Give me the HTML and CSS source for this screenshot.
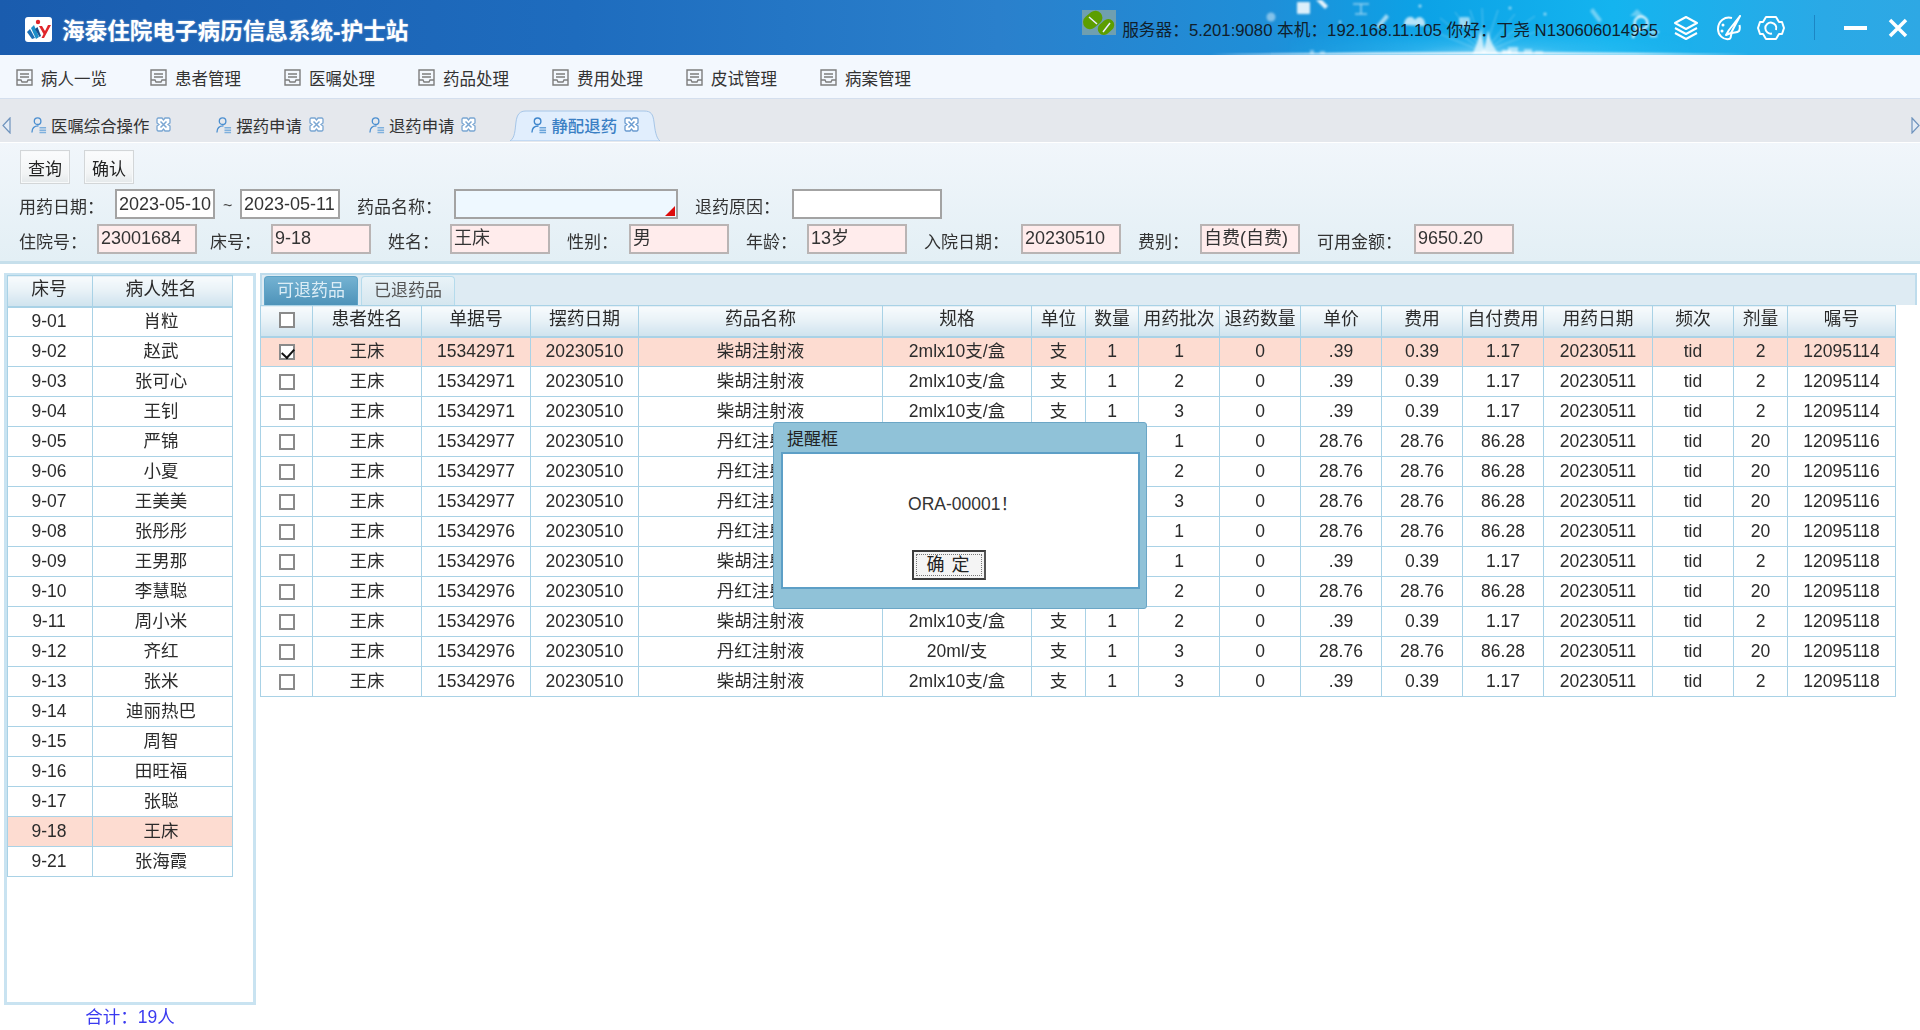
FILE: index.html
```html
<!DOCTYPE html>
<html lang="zh-CN">
<head>
<meta charset="utf-8">
<title>海泰住院电子病历信息系统-护士站</title>
<link rel="stylesheet" href="styles.css">
</head>
<body>
<header class="header">
  <svg class="burst" viewBox="0 0 1920 55" preserveAspectRatio="none" aria-hidden="true">
    <defs>
      <radialGradient id="glow" cx="50%" cy="100%" r="60%">
        <stop offset="0" stop-color="#ffffff" stop-opacity=".5"/>
        <stop offset=".35" stop-color="#7fdcff" stop-opacity=".25"/>
        <stop offset="1" stop-color="#12b4f0" stop-opacity="0"/>
      </radialGradient>
    </defs>
    <rect x="1290" y="0" width="400" height="55" fill="url(#glow)"/>
    <path d="M1210 55 Q1480 49 1750 55 Z" fill="#eef7fd"/>
    <g stroke="#fff" stroke-opacity=".3" stroke-width="1">
      <path d="M1484 52 L1455 12M1484 52 L1470 10M1484 52 L1482 8M1484 52 L1498 10M1484 52 L1515 14M1484 52 L1535 16M1484 52 L1440 18M1484 52 L1425 28M1484 52 L1550 26"/>
    </g>
    <g fill="#fff">
      <path d="M1472 55 C1476 46 1479 38 1481 28 L1484 50 L1488 30 C1490 40 1493 47 1500 55 Z" fill-opacity=".7"/>
      <rect x="1297" y="2" width="13" height="12" rx="1" fill-opacity=".85"/>
      <path d="M1316 0 L1322 0 L1328 6 L1325 9 Z" fill-opacity=".9"/>
      <circle cx="1271" cy="17" r="4.500" fill-opacity=".45"/>
      <path d="M1353 4 H1369 M1361 4 V14 M1355 14 H1367" stroke="#fff" stroke-opacity=".55" stroke-width="1.500" fill="none"/>
      <path d="M1376 26 L1386 14 L1389 17 L1379 29 Z" fill-opacity=".6"/>
      <path d="M1404 25 C1404 17 1412 14 1415 20 C1419 14 1426 18 1425 26 Z" fill-opacity=".7"/>
      <rect x="1459" y="17" width="11" height="10" rx="2" fill-opacity=".55"/>
      <path d="M1593 8 L1602 20 L1599 23 L1590 11 Z" fill-opacity=".4"/>
      <path d="M1630 16 L1637 9 L1644 16 Z" fill-opacity=".35"/>
      <circle cx="1510" cy="8" r="1.500" fill-opacity=".6"/>
      <circle cx="1545" cy="14" r="1.500" fill-opacity=".6"/>
      <circle cx="1420" cy="6" r="1.500" fill-opacity=".7"/>
      <circle cx="1340" cy="22" r="1.200" fill-opacity=".7"/>
      <rect x="1502" y="50" width="9" height="5" fill-opacity=".7"/>
      <rect x="1508" y="47" width="10" height="8" fill-opacity=".55"/>
      <rect x="1524" y="49" width="8" height="6" fill-opacity=".5"/>
      <rect x="1535" y="51" width="8" height="4" fill-opacity=".5"/>
      <rect x="1310" y="50" width="4" height="5" fill-opacity=".4"/>
      <rect x="1320" y="51" width="5" height="4" fill-opacity=".4"/>
    </g>
    <g fill="none" stroke="#fff" stroke-width="2">
      <circle cx="1641" cy="23" r="6.500"/>
      <path d="M1633 38 C1634 32 1636 30 1640 30"/>
      <path d="M1650 32 H1659 M1650 36 H1657" stroke-width="1.500"/>
    </g>
  </svg>
  <svg class="logo" viewBox="0 0 27 25" aria-hidden="true">
    <rect width="27" height="25" rx="3" fill="#fff"/>
    <path d="M2 15 L5 12 L10 21 L7 22 Z" fill="#1c6fb5"/>
    <path d="M6 11 L9 8 L14 20 L11 22 Z" fill="#1c8fc9"/>
    <path d="M10 12 L12.500 10 L16 19 L14.500 20 Z" fill="#16508f"/>
    <circle cx="13" cy="5" r="2.200" fill="#e0262b"/>
    <path d="M14 9 L17 9 L20 14 L23 8 L26 8 L19 21 L16.500 21 L18.500 17 Z" fill="#e0262b"/>
  </svg>
  <h1 class="title">海泰住院电子病历信息系统-护士站</h1>
  <div class="status">
    <svg class="pill" viewBox="0 0 34 25" aria-hidden="true">
      <rect width="34" height="25" fill="#6f9fb0"/>
      <rect x="1" y="3" width="21" height="14" rx="7" transform="rotate(-40 11 11)" fill="#5c9e00"/>
      <rect x="15" y="11" width="18" height="12" rx="6" transform="rotate(-42 24 17)" fill="#5c9e00"/>
      <path d="M7 7 L15 14M21 22 L28 13" stroke="#eef" stroke-width="1.500"/>
    </svg>
    <span class="status-text">服务器：5.201:9080 本机：192.168.11.105 你好：丁尧 N130606014955</span>
  </div>
  <div class="win-tools">
    <svg class="tool" viewBox="0 0 24 26" aria-hidden="true"><path d="M12 2 L23 8 L12 14 L1 8 Z M1 13 L12 19 L23 13 M1 18 L12 24 L23 18" fill="none" stroke="#fff" stroke-width="2" stroke-linejoin="round"/></svg>
    <svg class="tool" viewBox="0 0 24 26" aria-hidden="true"><path d="M15 3 C8 1 1 6 1 14 C1 20 6 25 12 24 C15 23.500 13 20 15 18 C17 17 20 18 22 16 C23 14 23 12 22.500 10" fill="none" stroke="#fff" stroke-width="2"/><path d="M23 1 L12 15 L9 20 L14 18 Z" fill="none" stroke="#fff" stroke-width="2" stroke-linejoin="round"/><circle cx="6" cy="10" r="1.500" fill="#fff"/><circle cx="5" cy="16" r="1.500" fill="#fff"/></svg>
    <svg class="tool gear" viewBox="0 0 28 26" aria-hidden="true"><path d="M9 2 H19 L22 7 H25 L27 13 L25 19 H22 L19 24 H9 L6 19 H3 L1 13 L3 7 H6 Z" fill="none" stroke="#fff" stroke-width="2" stroke-linejoin="round"/><path d="M19 15 A5.500 5.500 0 1 0 15 18.500" fill="none" stroke="#fff" stroke-width="2"/></svg>
    <span class="win-sep"></span>
    <span class="win-min"></span>
    <svg class="win-x" viewBox="0 0 20 20" aria-hidden="true"><path d="M2 2 L18 18 M18 2 L2 18" stroke="#fff" stroke-width="3.500"/></svg>
  </div>
</header>

<nav class="menu">
  <a class="menu-item"><svg class="doc" viewBox="0 0 17 17" aria-hidden="true"><path d="M1 1 H16 V16 H1 Z M1 11 H5 L6 13 H11 L12 11 H16 M4 5 H13 M4 8 H13" fill="none" stroke="#7d7d7d" stroke-width="1.400"/></svg>病人一览</a>
  <a class="menu-item"><svg class="doc" viewBox="0 0 17 17" aria-hidden="true"><path d="M1 1 H16 V16 H1 Z M1 11 H5 L6 13 H11 L12 11 H16 M4 5 H13 M4 8 H13" fill="none" stroke="#7d7d7d" stroke-width="1.400"/></svg>患者管理</a>
  <a class="menu-item"><svg class="doc" viewBox="0 0 17 17" aria-hidden="true"><path d="M1 1 H16 V16 H1 Z M1 11 H5 L6 13 H11 L12 11 H16 M4 5 H13 M4 8 H13" fill="none" stroke="#7d7d7d" stroke-width="1.400"/></svg>医嘱处理</a>
  <a class="menu-item"><svg class="doc" viewBox="0 0 17 17" aria-hidden="true"><path d="M1 1 H16 V16 H1 Z M1 11 H5 L6 13 H11 L12 11 H16 M4 5 H13 M4 8 H13" fill="none" stroke="#7d7d7d" stroke-width="1.400"/></svg>药品处理</a>
  <a class="menu-item"><svg class="doc" viewBox="0 0 17 17" aria-hidden="true"><path d="M1 1 H16 V16 H1 Z M1 11 H5 L6 13 H11 L12 11 H16 M4 5 H13 M4 8 H13" fill="none" stroke="#7d7d7d" stroke-width="1.400"/></svg>费用处理</a>
  <a class="menu-item"><svg class="doc" viewBox="0 0 17 17" aria-hidden="true"><path d="M1 1 H16 V16 H1 Z M1 11 H5 L6 13 H11 L12 11 H16 M4 5 H13 M4 8 H13" fill="none" stroke="#7d7d7d" stroke-width="1.400"/></svg>皮试管理</a>
  <a class="menu-item"><svg class="doc" viewBox="0 0 17 17" aria-hidden="true"><path d="M1 1 H16 V16 H1 Z M1 11 H5 L6 13 H11 L12 11 H16 M4 5 H13 M4 8 H13" fill="none" stroke="#7d7d7d" stroke-width="1.400"/></svg>病案管理</a>
</nav>

<div class="tabs">
  <svg class="arrow" viewBox="0 0 9 17" aria-hidden="true"><path d="M8 1 L1 8.500 L8 16 Z" fill="#e3ebf5" stroke="#6f93bd" stroke-width="1.200"/></svg>
  <div class="tab tab-first">
    <svg class="pers" viewBox="0 0 17 18" aria-hidden="true"><circle cx="7" cy="5" r="3.500" fill="none" stroke="#4a8ed0" stroke-width="1.400"/><path d="M1 17 C1 12 4 10 8 10" fill="none" stroke="#4a8ed0" stroke-width="1.400"/><path d="M9 12 H16 M9 14.500 H16 M9 17 H16" stroke="#7fb0dd" stroke-width="1.500"/></svg>
    <span>医嘱综合操作</span>
    <svg class="close" viewBox="0 0 15 15" aria-hidden="true"><path d="M2 1 H6 L7.500 3 L9 1 H13 L14 2 V6 L12 7.500 L14 9 V13 L13 14 H9 L7.500 12 L6 14 H2 L1 13 V9 L3 7.500 L1 6 V2 Z" fill="#fff" stroke="#7aa6d2" stroke-width="1.300"/><path d="M4.500 4.500 L10.500 10.500 M10.500 4.500 L4.500 10.500" stroke="#7aa6d2" stroke-width="1.500"/></svg>
  </div>
  <div class="tab">
    <svg class="pers" viewBox="0 0 17 18" aria-hidden="true"><circle cx="7" cy="5" r="3.500" fill="none" stroke="#4a8ed0" stroke-width="1.400"/><path d="M1 17 C1 12 4 10 8 10" fill="none" stroke="#4a8ed0" stroke-width="1.400"/><path d="M9 12 H16 M9 14.500 H16 M9 17 H16" stroke="#7fb0dd" stroke-width="1.500"/></svg>
    <span>摆药申请</span>
    <svg class="close" viewBox="0 0 15 15" aria-hidden="true"><path d="M2 1 H6 L7.500 3 L9 1 H13 L14 2 V6 L12 7.500 L14 9 V13 L13 14 H9 L7.500 12 L6 14 H2 L1 13 V9 L3 7.500 L1 6 V2 Z" fill="#fff" stroke="#7aa6d2" stroke-width="1.300"/><path d="M4.500 4.500 L10.500 10.500 M10.500 4.500 L4.500 10.500" stroke="#7aa6d2" stroke-width="1.500"/></svg>
  </div>
  <div class="tab">
    <svg class="pers" viewBox="0 0 17 18" aria-hidden="true"><circle cx="7" cy="5" r="3.500" fill="none" stroke="#4a8ed0" stroke-width="1.400"/><path d="M1 17 C1 12 4 10 8 10" fill="none" stroke="#4a8ed0" stroke-width="1.400"/><path d="M9 12 H16 M9 14.500 H16 M9 17 H16" stroke="#7fb0dd" stroke-width="1.500"/></svg>
    <span>退药申请</span>
    <svg class="close" viewBox="0 0 15 15" aria-hidden="true"><path d="M2 1 H6 L7.500 3 L9 1 H13 L14 2 V6 L12 7.500 L14 9 V13 L13 14 H9 L7.500 12 L6 14 H2 L1 13 V9 L3 7.500 L1 6 V2 Z" fill="#fff" stroke="#7aa6d2" stroke-width="1.300"/><path d="M4.500 4.500 L10.500 10.500 M10.500 4.500 L4.500 10.500" stroke="#7aa6d2" stroke-width="1.500"/></svg>
  </div>
  <div class="tab tab-on">
    <svg class="tab-shape" viewBox="0 0 150 31" preserveAspectRatio="none" aria-hidden="true"><path d="M0 31 C5 28 5 20 6 12 C7 4 10 1 16 1 L134 1 C141 1 143 4 144 12 C145 20 146 28 150 31 Z" fill="#e1eefd" stroke="#a6c6e8" stroke-width="1"/></svg>
    <svg class="pers" viewBox="0 0 17 18" aria-hidden="true"><circle cx="7" cy="5" r="3.500" fill="none" stroke="#3f86cc" stroke-width="1.500"/><path d="M1 17 C1 12 4 10 8 10" fill="none" stroke="#3f86cc" stroke-width="1.500"/><path d="M9 12 H16 M9 14.500 H16 M9 17 H16" stroke="#6aa4da" stroke-width="1.500"/></svg>
    <span>静配退药</span>
    <svg class="close" viewBox="0 0 15 15" aria-hidden="true"><path d="M2 1 H6 L7.500 3 L9 1 H13 L14 2 V6 L12 7.500 L14 9 V13 L13 14 H9 L7.500 12 L6 14 H2 L1 13 V9 L3 7.500 L1 6 V2 Z" fill="#fff" stroke="#6a9bd0" stroke-width="1.300"/><path d="M4.500 4.500 L10.500 10.500 M10.500 4.500 L4.500 10.500" stroke="#6a9bd0" stroke-width="1.500"/></svg>
  </div>
  <svg class="arrow arrow-r" viewBox="0 0 9 17" aria-hidden="true"><path d="M1 1 L8 8.500 L1 16 Z" fill="#e3ebf5" stroke="#6f93bd" stroke-width="1.200"/></svg>
</div>

<section class="form">
  <div class="actions">
    <button class="btn">查询</button>
    <button class="btn">确认</button>
  </div>
  <div class="form-row row-a">
    <span class="lbl lbl-first">用药日期：</span>
    <div class="fld">2023-05-10</div>
    <span class="tilde">~</span>
    <div class="fld">2023-05-11</div>
    <span class="lbl">药品名称：</span>
    <div class="fld fld-sel"></div>
    <span class="lbl">退药原因：</span>
    <div class="fld"></div>
  </div>
  <div class="form-row row-b">
    <span class="lbl lbl-first">住院号：</span>
    <div class="fld fld-ro">23001684</div>
    <span class="lbl lbl-tight">床号：</span>
    <div class="fld fld-ro">9-18</div>
    <span class="lbl">姓名：</span>
    <div class="fld fld-ro">王床</div>
    <span class="lbl">性别：</span>
    <div class="fld fld-ro">男</div>
    <span class="lbl">年龄：</span>
    <div class="fld fld-ro">13岁</div>
    <span class="lbl">入院日期：</span>
    <div class="fld fld-ro">20230510</div>
    <span class="lbl">费别：</span>
    <div class="fld fld-ro">自费(自费)</div>
    <span class="lbl">可用金额：</span>
    <div class="fld fld-ro">9650.20</div>
  </div>
</section>

<main class="main">
  <aside class="side">
    <div class="side-frame">
      <table class="grid side-table">
        <colgroup><col class="c85"><col class="c140"></colgroup>
        <thead><tr><th>床号</th><th>病人姓名</th></tr></thead>
        <tbody>
          <tr><td>9-01</td><td>肖粒</td></tr>
          <tr><td>9-02</td><td>赵武</td></tr>
          <tr><td>9-03</td><td>张可心</td></tr>
          <tr><td>9-04</td><td>王钊</td></tr>
          <tr><td>9-05</td><td>严锦</td></tr>
          <tr><td>9-06</td><td>小夏</td></tr>
          <tr><td>9-07</td><td>王美美</td></tr>
          <tr><td>9-08</td><td>张彤彤</td></tr>
          <tr><td>9-09</td><td>王男那</td></tr>
          <tr><td>9-10</td><td>李慧聪</td></tr>
          <tr><td>9-11</td><td>周小米</td></tr>
          <tr><td>9-12</td><td>齐红</td></tr>
          <tr><td>9-13</td><td>张米</td></tr>
          <tr><td>9-14</td><td>迪丽热巴</td></tr>
          <tr><td>9-15</td><td>周智</td></tr>
          <tr><td>9-16</td><td>田旺福</td></tr>
          <tr><td>9-17</td><td>张聪</td></tr>
          <tr class="sel"><td>9-18</td><td>王床</td></tr>
          <tr><td>9-21</td><td>张海霞</td></tr>
        </tbody>
      </table>
    </div>
    <div class="total">合计：19人</div>
  </aside>

  <div class="content">
    <div class="subtabs">
      <span class="subtab subtab-on">可退药品</span>
      <span class="subtab">已退药品</span>
    </div>
    <table class="grid drug-table">
      <colgroup>
        <col class="c52"><col class="c109"><col class="c109"><col class="c108"><col class="c244"><col class="c149"><col class="c54"><col class="c53"><col class="c81"><col class="c81"><col class="c81"><col class="c81"><col class="c81"><col class="c109"><col class="c81"><col class="c54"><col class="c108">
      </colgroup>
      <thead>
        <tr><th><span class="chk"></span></th><th>患者姓名</th><th>单据号</th><th>摆药日期</th><th>药品名称</th><th>规格</th><th>单位</th><th>数量</th><th>用药批次</th><th>退药数量</th><th>单价</th><th>费用</th><th>自付费用</th><th>用药日期</th><th>频次</th><th>剂量</th><th>嘱号</th></tr>
      </thead>
      <tbody>
        <tr class="sel"><td><span class="chk chk-on"></span></td><td>王床</td><td>15342971</td><td>20230510</td><td>柴胡注射液</td><td>2mlx10支/盒</td><td>支</td><td>1</td><td>1</td><td>0</td><td>.39</td><td>0.39</td><td>1.17</td><td>20230511</td><td>tid</td><td>2</td><td>12095114</td></tr>
        <tr><td><span class="chk"></span></td><td>王床</td><td>15342971</td><td>20230510</td><td>柴胡注射液</td><td>2mlx10支/盒</td><td>支</td><td>1</td><td>2</td><td>0</td><td>.39</td><td>0.39</td><td>1.17</td><td>20230511</td><td>tid</td><td>2</td><td>12095114</td></tr>
        <tr><td><span class="chk"></span></td><td>王床</td><td>15342971</td><td>20230510</td><td>柴胡注射液</td><td>2mlx10支/盒</td><td>支</td><td>1</td><td>3</td><td>0</td><td>.39</td><td>0.39</td><td>1.17</td><td>20230511</td><td>tid</td><td>2</td><td>12095114</td></tr>
        <tr><td><span class="chk"></span></td><td>王床</td><td>15342977</td><td>20230510</td><td>丹红注射液</td><td>20ml/支</td><td>支</td><td>1</td><td>1</td><td>0</td><td>28.76</td><td>28.76</td><td>86.28</td><td>20230511</td><td>tid</td><td>20</td><td>12095116</td></tr>
        <tr><td><span class="chk"></span></td><td>王床</td><td>15342977</td><td>20230510</td><td>丹红注射液</td><td>20ml/支</td><td>支</td><td>1</td><td>2</td><td>0</td><td>28.76</td><td>28.76</td><td>86.28</td><td>20230511</td><td>tid</td><td>20</td><td>12095116</td></tr>
        <tr><td><span class="chk"></span></td><td>王床</td><td>15342977</td><td>20230510</td><td>丹红注射液</td><td>20ml/支</td><td>支</td><td>1</td><td>3</td><td>0</td><td>28.76</td><td>28.76</td><td>86.28</td><td>20230511</td><td>tid</td><td>20</td><td>12095116</td></tr>
        <tr><td><span class="chk"></span></td><td>王床</td><td>15342976</td><td>20230510</td><td>丹红注射液</td><td>20ml/支</td><td>支</td><td>1</td><td>1</td><td>0</td><td>28.76</td><td>28.76</td><td>86.28</td><td>20230511</td><td>tid</td><td>20</td><td>12095118</td></tr>
        <tr><td><span class="chk"></span></td><td>王床</td><td>15342976</td><td>20230510</td><td>柴胡注射液</td><td>2mlx10支/盒</td><td>支</td><td>1</td><td>1</td><td>0</td><td>.39</td><td>0.39</td><td>1.17</td><td>20230511</td><td>tid</td><td>2</td><td>12095118</td></tr>
        <tr><td><span class="chk"></span></td><td>王床</td><td>15342976</td><td>20230510</td><td>丹红注射液</td><td>20ml/支</td><td>支</td><td>1</td><td>2</td><td>0</td><td>28.76</td><td>28.76</td><td>86.28</td><td>20230511</td><td>tid</td><td>20</td><td>12095118</td></tr>
        <tr><td><span class="chk"></span></td><td>王床</td><td>15342976</td><td>20230510</td><td>柴胡注射液</td><td>2mlx10支/盒</td><td>支</td><td>1</td><td>2</td><td>0</td><td>.39</td><td>0.39</td><td>1.17</td><td>20230511</td><td>tid</td><td>2</td><td>12095118</td></tr>
        <tr><td><span class="chk"></span></td><td>王床</td><td>15342976</td><td>20230510</td><td>丹红注射液</td><td>20ml/支</td><td>支</td><td>1</td><td>3</td><td>0</td><td>28.76</td><td>28.76</td><td>86.28</td><td>20230511</td><td>tid</td><td>20</td><td>12095118</td></tr>
        <tr><td><span class="chk"></span></td><td>王床</td><td>15342976</td><td>20230510</td><td>柴胡注射液</td><td>2mlx10支/盒</td><td>支</td><td>1</td><td>3</td><td>0</td><td>.39</td><td>0.39</td><td>1.17</td><td>20230511</td><td>tid</td><td>2</td><td>12095118</td></tr>
      </tbody>
    </table>
  </div>
</main>

<div class="dialog" role="dialog">
  <div class="dialog-title">提醒框</div>
  <div class="dialog-body">
    <p class="dialog-msg">ORA-00001！</p>
    <button class="dialog-btn"><span class="dialog-btn-in">确 定</span></button>
  </div>
</div>
</body>
</html>
```

FILE: styles.css
```css
* { box-sizing: border-box; }
html, body { margin: 0; padding: 0; }
body {
  width: 1920px;
  height: 1030px;
  overflow: hidden;
  position: relative;
  background: #fff;
  color: #222;
  font-family: "Liberation Sans", "Noto Sans CJK SC", sans-serif;
  font-size: 17.5px;
  filter: blur(0.4px);
}

/* header */
.header {
  position: relative;
  height: 55px;
  display: flex;
  align-items: center;
  padding-left: 25px;
  padding-right: 12px;
  background: linear-gradient(90deg, #1a5cae 0%, #1e6cbe 30%, #2a80cc 52%, #1f8fd8 66%, #0ca2e6 74%, #14b4ef 84%, #2aa9e6 95%, #2ea8e4 100%);
  overflow: hidden;
}
.burst { position: absolute; left: 0; top: 0; width: 1920px; height: 55px; filter: blur(0.8px); }
.logo { position: relative; width: 27px; height: 25px; flex: none; margin-top: 3px; }
.title {
  position: relative;
  margin: 3px 0 0 10px;
  font-size: 22.6px;
  font-weight: 700;
  color: #fff;
  white-space: nowrap;
  text-shadow: 0 0 2px rgba(255,255,255,.5);
}
.status { position: relative; margin-left: auto; display: flex; align-items: center; gap: 6px; }
.pill { width: 34px; height: 25px; flex: none; margin-bottom: 10px; }
.status-text { font-size: 16.7px; color: #10202c; white-space: nowrap; margin-top: 2px; }
.win-tools { position: relative; display: flex; align-items: center; margin-left: 16px; }
.tool { width: 24px; height: 26px; margin-right: 19px; flex: none; }
.gear { width: 28px; margin-left: -3px; margin-right: 29px; }
.win-sep { width: 1px; height: 25px; background: #1c86c4; margin-right: 29px; }
.win-min { width: 23px; height: 4px; background: #fff; margin-right: 21px; }
.win-x { width: 20px; height: 20px; }

/* menu */
.menu {
  height: 44px;
  display: flex;
  align-items: center;
  gap: 43px;
  padding: 2px 0 0 16px;
  background: #f3f8fe;
  border-bottom: 1px solid #d4dfee;
}
.menu-item { display: flex; align-items: center; gap: 8px; font-size: 16.5px; color: #333; }
.doc { width: 17px; height: 17px; flex: none; }

/* tabs */
.tabs {
  height: 44px;
  display: flex;
  align-items: flex-start;
  padding-top: 11px;
  background: #e5e8ed;
  border-bottom: 1px solid #fff;
}
.arrow { width: 9px; height: 17px; margin: 7px 0 0 2px; flex: none; }
.arrow-r { margin-left: auto; margin-right: 0; }
.tab {
  position: relative;
  height: 31px;
  display: flex;
  align-items: center;
  gap: 4px;
  margin-left: 45px;
  padding-bottom: 2px;
  font-size: 16.4px;
  color: #333;
  white-space: nowrap;
}
.tab-first { margin-left: 20px; }
.tab-on { width: 150px; margin-left: 34px; padding-left: 21px; color: #3a7fc4; font-weight: 500; }
.tab-shape { position: absolute; left: 0; top: 0; width: 150px; height: 31px; }
.tab .pers, .tab span, .tab .close { position: relative; }
.pers { width: 16px; height: 18px; flex: none; }
.close { width: 15px; height: 15px; flex: none; margin-left: 3px; }

/* form */
.form {
  height: 118px;
  padding: 7px 0 0 18px;
  background: linear-gradient(180deg, #f1f6fb 0%, #e3eff5 100%);
}
.actions { display: flex; gap: 14px; margin: 0 0 5px 2px; }
.btn {
  width: 50px;
  height: 34px;
  padding: 0;
  border: 1px solid #d3d6d8;
  outline: 1px solid #f7f9fa;
  outline-offset: -2px;
  background: linear-gradient(180deg, #fbfcfd 0%, #f2f4f5 70%, #e4e8ea 100%);
  font: inherit;
  font-size: 17px;
  color: #222;
}
.form-row { display: grid; height: 27px; align-items: stretch; }
.row-a { grid-template-columns: 97px 100px 25px 100px 114px 224px 114px 150px; }
.row-b { margin-top: 8px; grid-template-columns: 79px 100px 74px 100px 79px 100px 79px 100px 78px 100px 114px 100px 79px 100px 114px 100px; }
.lbl { padding: 8px 0 0 17px; font-size: 17px; line-height: 22px; color: #333; white-space: nowrap; }
.lbl-first { padding-left: 1px; }
.lbl-tight { padding-left: 13px; }
.tilde { padding: 7px 0 0 8px; line-height: 20px; font-size: 16px; color: #444; }
.fld {
  position: relative;
  background: #fff;
  border: 2px solid #a3a3a3;
  padding: 1px 0 0 2px;
  font-size: 18px;
  line-height: 22px;
  color: #333;
  white-space: nowrap;
  overflow: hidden;
}
.row-a .fld { padding-top: 2px; }
.fld-sel { background: #eef8ff; }
.fld-sel::after {
  content: "";
  position: absolute;
  right: 1px;
  bottom: 1px;
  width: 10px;
  height: 10px;
  background: #dd0c0c;
  clip-path: polygon(100% 0, 100% 100%, 0 100%);
}
.fld-ro { background: #ffecec; border-color: #b9b4b4; }

/* main */
.main { display: flex; align-items: flex-start; padding-top: 9px; border-top: 3px solid #c6dfeb; }
.side { width: 256px; padding-left: 4px; flex: none; }
.side-frame {
  width: 252px;
  height: 732px;
  border: 3px solid #c9e3f1;
  padding: 0;
  background: #fff;
}
.total { text-align: center; color: #3a3af0; font-size: 17.5px; line-height: 22px; padding-top: 1px; }
.content { margin-left: 4px; width: 1657px; }
.subtabs {
  height: 32px;
  display: flex;
  align-items: flex-end;
  gap: 3px;
  background: #deebf3;
  border: 2px solid #bedcec;
  border-bottom: 0;
  padding-left: 2px;
}
.subtab {
  width: 94px;
  height: 29px;
  line-height: 27px;
  text-align: center;
  font-size: 17px;
  color: #555;
  background: linear-gradient(180deg, #e9f3f8, #d5e6ef);
  border: 1px solid #b5dbec;
  border-bottom: 0;
  border-radius: 4px 4px 0 0;
}
.subtab-on { background: linear-gradient(180deg, #74b2d2, #4e93b9); border-color: #5da3c7; color: #dcedf6; }

/* tables */
.grid { border-collapse: collapse; table-layout: fixed; }
.side-table { width: 225px; margin: -1px 0 0 0; }
.side-table td:last-child, .side-table th:last-child { padding-right: 3px; }
.side-table td:first-child, .side-table th:first-child { padding-right: 2px; }
.drug-table { width: 1636px; }
.grid th, .grid td {
  border: 1px solid #a9d2e6;
  text-align: center;
  font-weight: 400;
  color: #2b2b2b;
  white-space: nowrap;
  overflow: hidden;
}
.grid th {
  height: 31px;
  padding: 0 0 4px;
  font-size: 17.8px;
  line-height: 22px;
  background: linear-gradient(180deg, #f8fbfd 0%, #e9f2f7 45%, #cfe3ee 100%);
  border-bottom-width: 2px;
}
.grid td { height: 30px; padding: 0 0 2px; line-height: 24px; }
.grid tr.sel td { background: #fddcd1; }
.c52 { width: 52px; } .c53 { width: 53px; } .c54 { width: 54px; } .c81 { width: 81px; }
.c85 { width: 85px; } .c108 { width: 108px; } .c109 { width: 109px; } .c140 { width: 140px; }
.c149 { width: 149px; } .c244 { width: 244px; }
.chk {
  display: inline-block;
  position: relative;
  width: 16px;
  height: 16px;
  vertical-align: middle;
  border: 2px solid #8a8a8a;
  background: #fff;
}
.chk-on::after {
  content: "";
  position: absolute;
  left: 3px;
  top: 0;
  width: 6px;
  height: 10px;
  border: solid #111;
  border-width: 0 2px 2px 0;
  transform: rotate(42deg);
}

/* dialog */
.dialog {
  position: absolute;
  left: 773px;
  top: 422px;
  width: 374px;
  height: 187px;
  padding: 6px 6px 0 7px;
  background: #90c2d8;
  border: 1px solid #6ba6c6;
  border-radius: 3px;
}
.dialog-title { height: 23px; line-height: 22px; padding-left: 6px; font-size: 17px; color: #222; }
.dialog-body {
  height: 137px;
  background: #fff;
  border: 2px solid #5d9fc6;
  text-align: center;
}
.dialog-msg { margin: 0 0 0 5px; padding: 38px 0 0 0; height: 96px; font-size: 17.5px; line-height: 24px; color: #333; }
.dialog-btn {
  width: 74px;
  height: 30px;
  padding: 2px;
  margin-left: -24px;
  background: #f4f4f4;
  border: 2px solid #3c3c3c;
  border-right-color: #555;
  font: inherit;
  font-size: 18px;
  color: #222;
}
.dialog-btn-in { display: block; height: 22px; line-height: 20px; border: 1px dotted #777; letter-spacing: 1px; }
```
